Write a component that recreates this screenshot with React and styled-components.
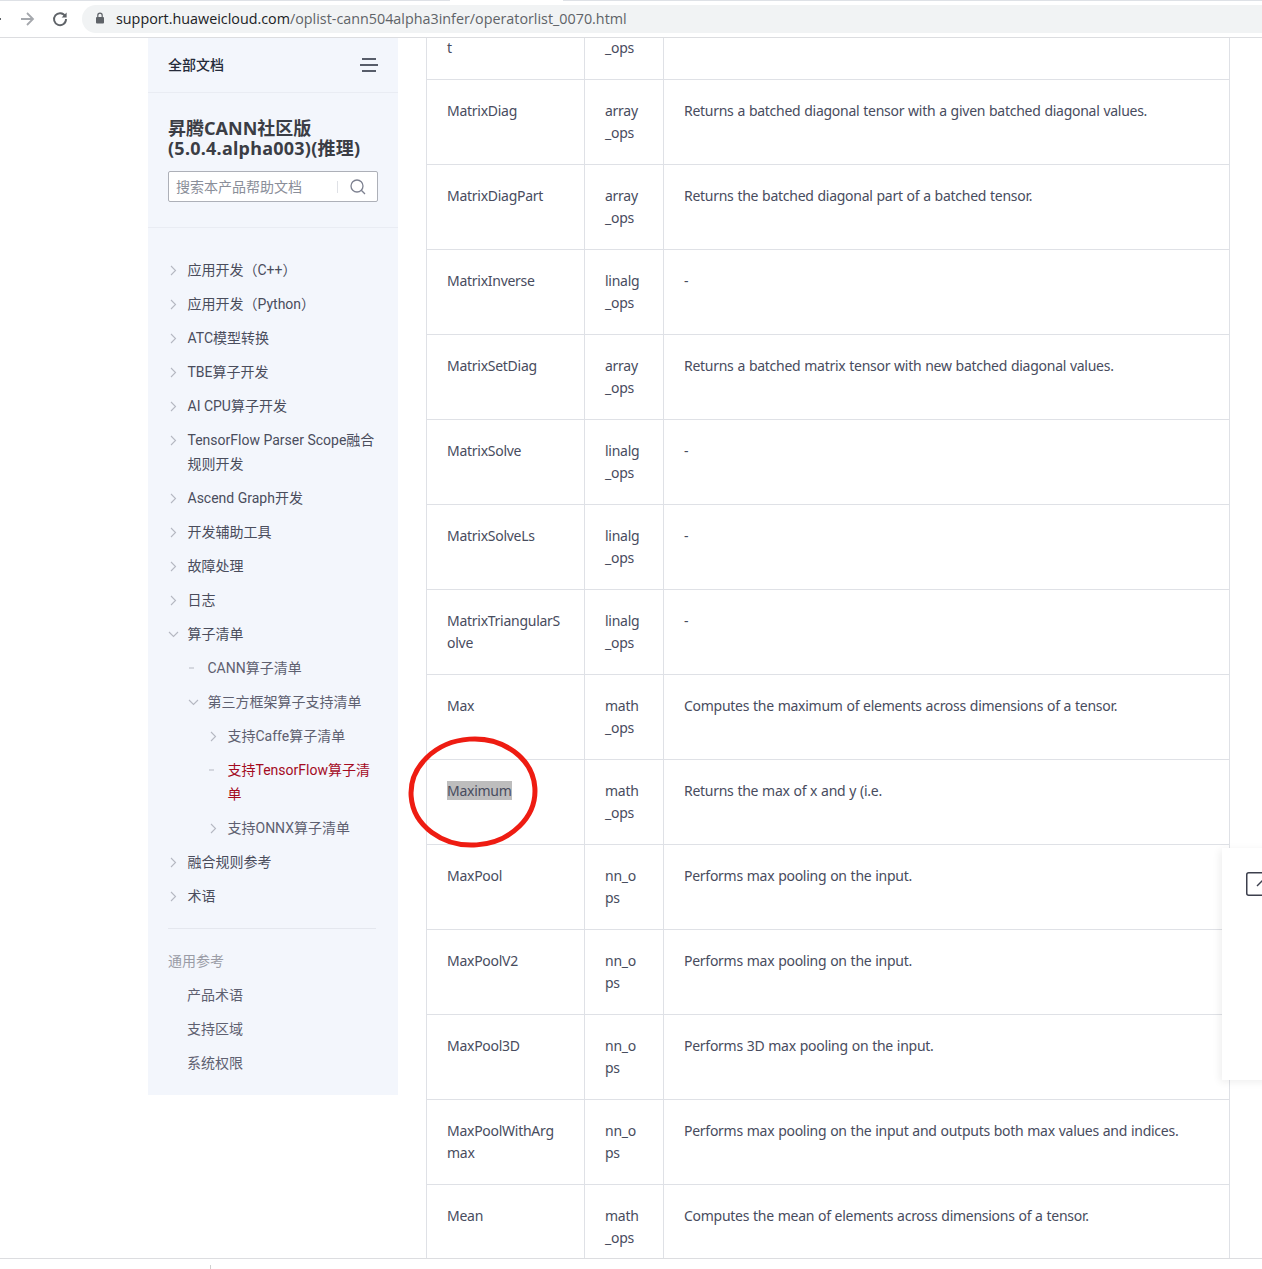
import React from "react";
import styled, { createGlobalStyle } from "styled-components";

const cjk = `"Noto Sans", "Noto Sans CJK SC", sans-serif`;
const treeFont = `Roboto, "Noto Sans CJK SC", sans-serif`;

const rows = [
  { name: "MatrixDiag", ops: "array_ops", desc: "Returns a batched diagonal tensor with a given batched diagonal values." },
  { name: "MatrixDiagPart", ops: "array_ops", desc: "Returns the batched diagonal part of a batched tensor." },
  { name: "MatrixInverse", ops: "linalg_ops", desc: "-" },
  { name: "MatrixSetDiag", ops: "array_ops", desc: "Returns a batched matrix tensor with new batched diagonal values." },
  { name: "MatrixSolve", ops: "linalg_ops", desc: "-" },
  { name: "MatrixSolveLs", ops: "linalg_ops", desc: "-" },
  { name: "MatrixTriangularSolve", ops: "linalg_ops", desc: "-" },
  { name: "Max", ops: "math_ops", desc: "Computes the maximum of elements across dimensions of a tensor." },
  { name: "Maximum", ops: "math_ops", desc: "Returns the max of x and y (i.e.", marked: true },
  { name: "MaxPool", ops: "nn_ops", desc: "Performs max pooling on the input." },
  { name: "MaxPoolV2", ops: "nn_ops", desc: "Performs max pooling on the input." },
  { name: "MaxPool3D", ops: "nn_ops", desc: "Performs 3D max pooling on the input." },
  { name: "MaxPoolWithArgmax", ops: "nn_ops", desc: "Performs max pooling on the input and outputs both max values and indices." },
  { name: "Mean", ops: "math_ops", desc: "Computes the mean of elements across dimensions of a tensor." },
];

const tree = [
  { label: "应用开发（C++）", icon: "right" },
  { label: "应用开发（Python）", icon: "right" },
  { label: "ATC模型转换", icon: "right" },
  { label: "TBE算子开发", icon: "right" },
  { label: "AI CPU算子开发", icon: "right" },
  { label: "TensorFlow Parser Scope融合规则开发", icon: "right" },
  { label: "Ascend Graph开发", icon: "right" },
  { label: "开发辅助工具", icon: "right" },
  { label: "故障处理", icon: "right" },
  { label: "日志", icon: "right" },
  { label: "算子清单", icon: "down" },
  { label: "CANN算子清单", icon: "dash", level: 1 },
  { label: "第三方框架算子支持清单", icon: "down", level: 1 },
  { label: "支持Caffe算子清单", icon: "right", level: 2 },
  { label: "支持TensorFlow算子清单", icon: "dash", level: 2, active: true },
  { label: "支持ONNX算子清单", icon: "right", level: 2 },
  { label: "融合规则参考", icon: "right" },
  { label: "术语", icon: "right" },
];

const Global = createGlobalStyle`
  html, body { margin: 0; padding: 0; background: #fff; }
  body { font-family: ${cjk}; }
`;

const Page = styled.div`
  width: 1262px;
  height: 1269px;
  display: flex;
  flex-direction: column;
  overflow: hidden;
`;

const TabStrip = styled.div`
  height: 1px;
  flex: none;
  display: flex;
  background: #dee1e6;
`;

const ActiveTab = styled.div`
  width: 113px;
  margin-left: 450px;
  background: #fff;
`;

const Toolbar = styled.header`
  height: 36px;
  flex: none;
  display: flex;
  align-items: center;
  border-bottom: 1px solid #dcdde0;
  background: #fff;
`;

const NavButton = styled.div`
  width: 32px;
  height: 24px;
  flex: none;
  display: flex;
  align-items: center;
  justify-content: center;
`;

const BackButton = styled(NavButton)`
  margin-left: -21px;
`;

const ReloadButton = styled(NavButton)`
  padding-left: 2px;
  width: 30px;
`;

const AddressBar = styled.div`
  flex: 1;
  height: 28px;
  box-sizing: border-box;
  margin-left: 7px;
  padding: 0 0 2px 13px;
  display: flex;
  align-items: center;
  gap: 11px;
  background: #f1f3f4;
  border-radius: 14px 0 0 14px;
  font-family: "Open Sans", sans-serif;
  font-size: 14.33px;
  color: #5f6368;
`;

const Host = styled.span`
  color: #202124;
`;

const Main = styled.main`
  position: relative;
  flex: 1;
  display: flex;
  align-items: flex-start;
  padding-left: 148px;
  overflow: hidden;
`;

const Sidebar = styled.aside`
  width: 250px;
  flex: none;
  background: #f3f6fc;
  color: #4a4d5c;
`;

const SideHead = styled.div`
  height: 54px;
  box-sizing: content-box;
  padding: 0 20px;
  display: flex;
  align-items: center;
  justify-content: space-between;
  border-bottom: 1px solid #e9ecf3;
  font-size: 14px;
  font-weight: 500;
  color: #252b3a;
`;

const SideHeadLabel = styled.span`
  padding-bottom: 3px;
`;

const SideTitle = styled.div`
  height: 135px;
  box-sizing: border-box;
  padding: 25px 20px 0;
  border-bottom: 1px solid #e9ecf3;
`;

const ProductName = styled.h2`
  margin: 0 0 13px;
  font-size: 18px;
  line-height: 20px;
  font-weight: 700;
  color: #3b3d45;
`;

const Version = styled.span`
  letter-spacing: 0.25px;
`;

const SearchBox = styled.div`
  height: 29px;
  display: flex;
  align-items: center;
  padding: 0 11px 0 7px;
  background: #fff;
  border: 1px solid #adb0b8;
  border-radius: 2px;
  font-size: 14px;
  color: #8a8e99;
`;

const SearchText = styled.span`
  flex: 1;
  padding-bottom: 2px;
`;

const SearchRule = styled.span`
  width: 1px;
  height: 12px;
  margin-right: 12px;
  background: #dfe1e6;
`;

const Tree = styled.ul`
  list-style: none;
  margin: 0;
  padding: 25px 20px 15px;
  font-family: ${treeFont};
`;

const TreeItem = styled.li`
  display: flex;
  padding: 5px 0 5px ${(p) => (p.$level || 0) * 20}px;
  font-size: 14px;
  line-height: 24px;
  color: ${(p) => (p.$active ? "#a40b1f" : p.$level ? "#5e6070" : "#4a4d5c")};
`;

const TreeIcon = styled.span`
  width: 19.5px;
  height: 24px;
  flex: none;
  display: flex;
  align-items: center;
`;

const SideRule = styled.div`
  height: 1px;
  margin: 0 22px 0 20px;
  background: #e4e7ee;
`;

const Common = styled.div`
  padding: 20px 20px 15px;
  font-size: 14px;
  line-height: 24px;
`;

const CommonTitle = styled.div`
  padding: 0 0 5px;
  color: #9a9ca6;
`;

const CommonLink = styled.div`
  padding: 5px 0 5px 19px;
  color: #5e6070;
`;

const Content = styled.div`
  width: 803px;
  margin-left: 28px;
`;

const Table = styled.table`
  width: 100%;
  table-layout: fixed;
  border-collapse: collapse;
  font-size: 14px;
  line-height: 22px;
  letter-spacing: -0.27px;
  word-spacing: 0.5px;
  color: #484c5e;
`;

const Col = styled.col`
  width: ${(p) => p.$w}px;
`;

const Row = styled.tr`
  height: ${(p) => p.$h || 85}px;
`;

const Cell = styled.td`
  box-sizing: border-box;
  vertical-align: top;
  padding: ${(p) => (p.$cut ? "0" : "20px")} 20px 0;
  line-height: ${(p) => (p.$cut ? "20px" : "22px")};
  border-left: 1px solid #dfe1e6;
  border-right: 1px solid #dfe1e6;
  border-bottom: 1px solid #dfe1e6;
  word-break: ${(p) => (p.$wide ? "normal" : "break-all")};
`;

const Mark = styled.span`
  background: #bdbdbd;
`;

const Ring = styled.svg`
  position: absolute;
  left: 406px;
  top: 697px;
  pointer-events: none;
`;

const FloatPanel = styled.div`
  position: absolute;
  left: 1222px;
  top: 810px;
  width: 60px;
  height: 232px;
  padding: 24px 0 0 24px;
  box-sizing: border-box;
  background: #fff;
  box-shadow: -2px 2px 8px rgba(0, 0, 0, 0.07);
`;

const StatusBar = styled.footer`
  height: 10px;
  flex: none;
  border-top: 1px solid #dcdde0;
  background: #fff;
  padding-left: 210px;
`;

const StatusTick = styled.div`
  width: 1px;
  height: 4px;
  margin-top: 6px;
  background: #d0d0d0;
`;

const Chevron = ({ kind }) => {
  if (kind === "dash") {
    return (
      <svg width="8" height="8" viewBox="0 0 8 8">
        <path d="M1 4h5" stroke="#b5b8c2" strokeWidth="1" />
      </svg>
    );
  }
  const d = kind === "down" ? "M1 3l4.5 4.5L10 3" : "M3 1l4.5 4.5L3 10";
  return (
    <svg width="11" height="11" viewBox="0 0 11 11" fill="none">
      <path d={d} stroke="#b5b8c2" strokeWidth="1.1" />
    </svg>
  );
};

export default function App() {
  return (
    <Page>
      <Global />
      <TabStrip>
        <ActiveTab />
      </TabStrip>
      <Toolbar>
        <BackButton>
          <svg width="16" height="16" viewBox="0 0 16 16" fill="none">
            <path d="M14 8H2M8 2L2 8l6 6" stroke="#5f6368" strokeWidth="1.8" />
          </svg>
        </BackButton>
        <NavButton>
          <svg width="16" height="16" viewBox="0 0 16 16" fill="none">
            <path d="M2 8h12M8 2l6 6-6 6" stroke="#a5a8ad" strokeWidth="1.8" />
          </svg>
        </NavButton>
        <ReloadButton>
          <svg width="16" height="16" viewBox="0 0 16 16" fill="none">
            <path d="M13.2 5.2A6 6 0 1 0 14 8" stroke="#5f6368" strokeWidth="1.9" />
            <path d="M14.6 1.4v5h-5z" fill="#5f6368" />
          </svg>
        </ReloadButton>
        <AddressBar>
          <svg width="10" height="12" viewBox="0 0 10 12">
            <rect x="1" y="5" width="8" height="6.5" rx="1" fill="#5f6368" />
            <path d="M2.8 5V3.4a2.2 2.2 0 0 1 4.4 0V5" stroke="#5f6368" strokeWidth="1.2" fill="none" />
          </svg>
          <span>
            <Host>support.huaweicloud.com</Host>/oplist-cann504alpha3infer/operatorlist_0070.html
          </span>
        </AddressBar>
      </Toolbar>
      <Main>
        <Sidebar>
          <SideHead>
            <SideHeadLabel>全部文档</SideHeadLabel>
            <svg width="18" height="14" viewBox="0 0 18 14">
              <path d="M2 1h14M0 7h18M2 13h14" stroke="#252b3a" strokeWidth="1.6" />
            </svg>
          </SideHead>
          <SideTitle>
            <ProductName>
              昇腾CANN社区版
              <br />
              <Version>(5.0.4.alpha003)(推理)</Version>
            </ProductName>
            <SearchBox>
              <SearchText>搜索本产品帮助文档</SearchText>
              <SearchRule />
              <svg width="16" height="16" viewBox="0 0 16 16" fill="none">
                <circle cx="7" cy="7" r="6" stroke="#7d8190" strokeWidth="1.3" />
                <path d="M11.3 11.3l3.7 3.7" stroke="#7d8190" strokeWidth="1.3" />
              </svg>
            </SearchBox>
          </SideTitle>
          <Tree>
            {tree.map((item) => (
              <TreeItem key={item.label} $level={item.level} $active={item.active}>
                <TreeIcon>
                  <Chevron kind={item.icon} />
                </TreeIcon>
                <span>{item.label}</span>
              </TreeItem>
            ))}
          </Tree>
          <SideRule />
          <Common>
            <CommonTitle>通用参考</CommonTitle>
            <CommonLink>产品术语</CommonLink>
            <CommonLink>支持区域</CommonLink>
            <CommonLink>系统权限</CommonLink>
          </Common>
        </Sidebar>
        <Content>
          <Table>
            <colgroup>
              <Col $w={158} />
              <Col $w={79} />
              <Col $w={566} />
            </colgroup>
            <tbody>
              <Row $h={41}>
                <Cell $cut>t</Cell>
                <Cell $cut>_ops</Cell>
                <Cell $cut />
              </Row>
              {rows.map((r) => (
                <Row key={r.name}>
                  <Cell>{r.marked ? <Mark>{r.name}</Mark> : r.name}</Cell>
                  <Cell>{r.ops}</Cell>
                  <Cell $wide>{r.desc}</Cell>
                </Row>
              ))}
            </tbody>
          </Table>
        </Content>
        <Ring width="136" height="116" viewBox="0 0 136 116" fill="none">
          <ellipse cx="67" cy="57" rx="62" ry="53" stroke="#ee1c12" strokeWidth="5" transform="rotate(-4 67 57)" />
        </Ring>
        <FloatPanel>
          <svg width="24" height="24" viewBox="0 0 24 24" fill="none">
            <rect x="0.75" y="0.75" width="22.5" height="22.5" rx="2" stroke="#3c3f4d" strokeWidth="1.5" />
            <path d="M11 14l7-7" stroke="#3c3f4d" strokeWidth="1.5" />
          </svg>
        </FloatPanel>
      </Main>
      <StatusBar>
        <StatusTick />
      </StatusBar>
    </Page>
  );
}
